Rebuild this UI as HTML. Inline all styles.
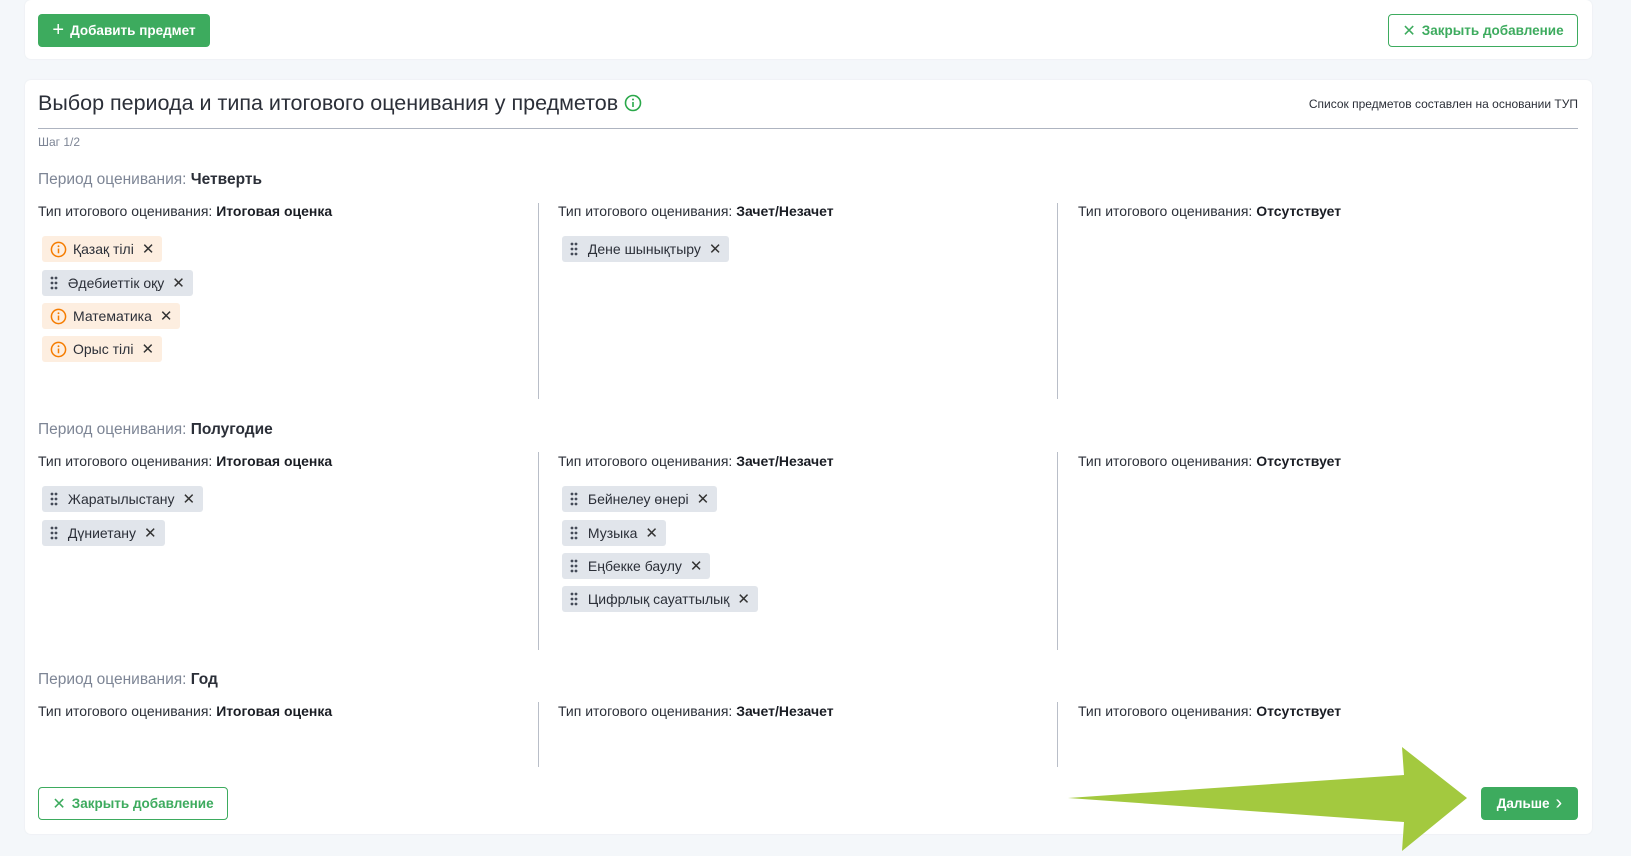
<!DOCTYPE html>
<html><head><meta charset="utf-8"><style>
*{box-sizing:border-box;margin:0;padding:0}
body{width:1631px;height:856px;background:#f4f7fa;font-family:"Liberation Sans",sans-serif;color:#1f2430;position:relative;overflow:hidden}
.card{position:absolute;left:25px;width:1567px;background:#fff;border-radius:6px;box-shadow:0 0 2px rgba(0,0,0,.06)}
.btn{position:absolute;height:33px;border-radius:4px;font-size:13.5px;font-weight:bold;display:flex;align-items:center;justify-content:center;gap:6px}
.g{background:#3dab5e;color:#fff}
.o{border:1.5px solid #3dab5e;color:#3dab5e;background:#fff}
.abs{position:absolute;white-space:nowrap}
.per{font-size:15.5px;color:#7d8595}.per b{color:#2b2f38}
.typ{font-size:14px;color:#2b2f38}.typ b{font-weight:bold;color:#1a1d24}
.div{position:absolute;width:1px;background:#b9bec8}
.chip{position:absolute;height:26px;border-radius:3px;display:flex;align-items:center;padding:0 8px 0 8px;font-size:14px;color:#2b2f38;gap:6px;white-space:nowrap}
.gr{background:#e1e5eb}.or{background:#fdeee0}
.x{font-size:15px;color:#333;margin-left:2px}
</style></head><body>
<div class="card" style="top:0;height:59px"></div>
<div class="btn g" style="left:38px;top:14px;width:172px"><span style="font-size:20px;font-weight:normal">+</span>Добавить предмет</div>
<div class="btn o" style="left:1388px;top:14px;width:190px"><span style="font-size:16px;font-weight:normal">✕</span>Закрыть добавление</div>
<div class="card" style="top:80px;height:754px"></div>
<div class="abs" style="left:38px;top:91px;font-size:21.5px;color:#2b2f38">Выбор периода и типа итогового оценивания у предметов <svg width="18" height="18" viewBox="0 0 18 18" style="vertical-align:-2px"><circle cx="9" cy="9" r="7.5" fill="none" stroke="#2aa84a" stroke-width="1.6"/><line x1="9" y1="8" x2="9" y2="13" stroke="#2aa84a" stroke-width="1.6"/><circle cx="9" cy="5.5" r="1" fill="#2aa84a"/></svg></div>
<div class="abs" style="right:53px;top:97px;font-size:12px;color:#2b2f38">Список предметов составлен на основании ТУП</div>
<div class="abs" style="left:38px;top:128px;width:1540px;height:1px;background:#aeb4c0"></div>
<div class="abs" style="left:38px;top:135px;font-size:12px;color:#7d8595">Шаг 1/2</div>

<svg width="0" height="0" style="position:absolute"><defs>
<symbol id="dr" viewBox="0 0 8 14"><g fill="#444a57"><circle cx="2" cy="2" r="1.4"/><circle cx="6" cy="2" r="1.4"/><circle cx="2" cy="7" r="1.4"/><circle cx="6" cy="7" r="1.4"/><circle cx="2" cy="12" r="1.4"/><circle cx="6" cy="12" r="1.4"/></g></symbol>
<symbol id="wi" viewBox="0 0 18 18"><circle cx="9" cy="9" r="7.5" fill="none" stroke="#f57c00" stroke-width="1.6"/><line x1="9" y1="8" x2="9" y2="13" stroke="#f57c00" stroke-width="1.6"/><circle cx="9" cy="5.5" r="1" fill="#f57c00"/></symbol>
</defs></svg>

<div class="abs per" style="left:38px;top:171px">Период оценивания: <b>Четверть</b></div>
<div class="abs typ" style="left:38px;top:203px">Тип итогового оценивания: <b>Итоговая оценка</b></div>
<div class="abs typ" style="left:558px;top:203px">Тип итогового оценивания: <b>Зачет/Незачет</b></div>
<div class="abs typ" style="left:1078px;top:203px">Тип итогового оценивания: <b>Отсутствует</b></div>
<div class="div" style="left:538px;top:203px;height:196px"></div>
<div class="div" style="left:1057px;top:203px;height:196px"></div>
<div class="chip or" style="left:42px;top:236px"><svg width="17" height="17"><use href="#wi"/></svg>Қазақ тілі<span class="x">✕</span></div>
<div class="chip gr" style="left:42px;top:270px"><svg width="8" height="14"><use href="#dr"/></svg>&nbsp;Әдебиеттік оқу<span class="x">✕</span></div>
<div class="chip or" style="left:42px;top:303px"><svg width="17" height="17"><use href="#wi"/></svg>Математика<span class="x">✕</span></div>
<div class="chip or" style="left:42px;top:336px"><svg width="17" height="17"><use href="#wi"/></svg>Орыс тілі<span class="x">✕</span></div>
<div class="chip gr" style="left:562px;top:236px"><svg width="8" height="14"><use href="#dr"/></svg>&nbsp;Дене шынықтыру<span class="x">✕</span></div>

<div class="abs per" style="left:38px;top:421px">Период оценивания: <b>Полугодие</b></div>
<div class="abs typ" style="left:38px;top:453px">Тип итогового оценивания: <b>Итоговая оценка</b></div>
<div class="abs typ" style="left:558px;top:453px">Тип итогового оценивания: <b>Зачет/Незачет</b></div>
<div class="abs typ" style="left:1078px;top:453px">Тип итогового оценивания: <b>Отсутствует</b></div>
<div class="div" style="left:538px;top:452px;height:198px"></div>
<div class="div" style="left:1057px;top:452px;height:198px"></div>
<div class="chip gr" style="left:42px;top:486px"><svg width="8" height="14"><use href="#dr"/></svg>&nbsp;Жаратылыстану<span class="x">✕</span></div>
<div class="chip gr" style="left:42px;top:520px"><svg width="8" height="14"><use href="#dr"/></svg>&nbsp;Дүниетану<span class="x">✕</span></div>
<div class="chip gr" style="left:562px;top:486px"><svg width="8" height="14"><use href="#dr"/></svg>&nbsp;Бейнелеу өнері<span class="x">✕</span></div>
<div class="chip gr" style="left:562px;top:520px"><svg width="8" height="14"><use href="#dr"/></svg>&nbsp;Музыка<span class="x">✕</span></div>
<div class="chip gr" style="left:562px;top:553px"><svg width="8" height="14"><use href="#dr"/></svg>&nbsp;Еңбекке баулу<span class="x">✕</span></div>
<div class="chip gr" style="left:562px;top:586px"><svg width="8" height="14"><use href="#dr"/></svg>&nbsp;Цифрлық сауаттылық<span class="x">✕</span></div>

<div class="abs per" style="left:38px;top:671px">Период оценивания: <b>Год</b></div>
<div class="abs typ" style="left:38px;top:703px">Тип итогового оценивания: <b>Итоговая оценка</b></div>
<div class="abs typ" style="left:558px;top:703px">Тип итогового оценивания: <b>Зачет/Незачет</b></div>
<div class="abs typ" style="left:1078px;top:703px">Тип итогового оценивания: <b>Отсутствует</b></div>
<div class="div" style="left:538px;top:702px;height:65px"></div>
<div class="div" style="left:1057px;top:702px;height:65px"></div>

<div class="btn o" style="left:38px;top:787px;width:190px"><span style="font-size:16px;font-weight:normal">✕</span>Закрыть добавление</div>
<div class="btn g" style="left:1481px;top:787px;width:97px">Дальше <span style="font-size:20px;font-weight:normal">›</span></div>
<svg class="abs" style="left:0;top:0" width="1631" height="856"><polygon points="1068,798 1404,775 1402,747 1467,798 1402,851 1404,822" fill="#a3c93f"/></svg>
</body></html>
